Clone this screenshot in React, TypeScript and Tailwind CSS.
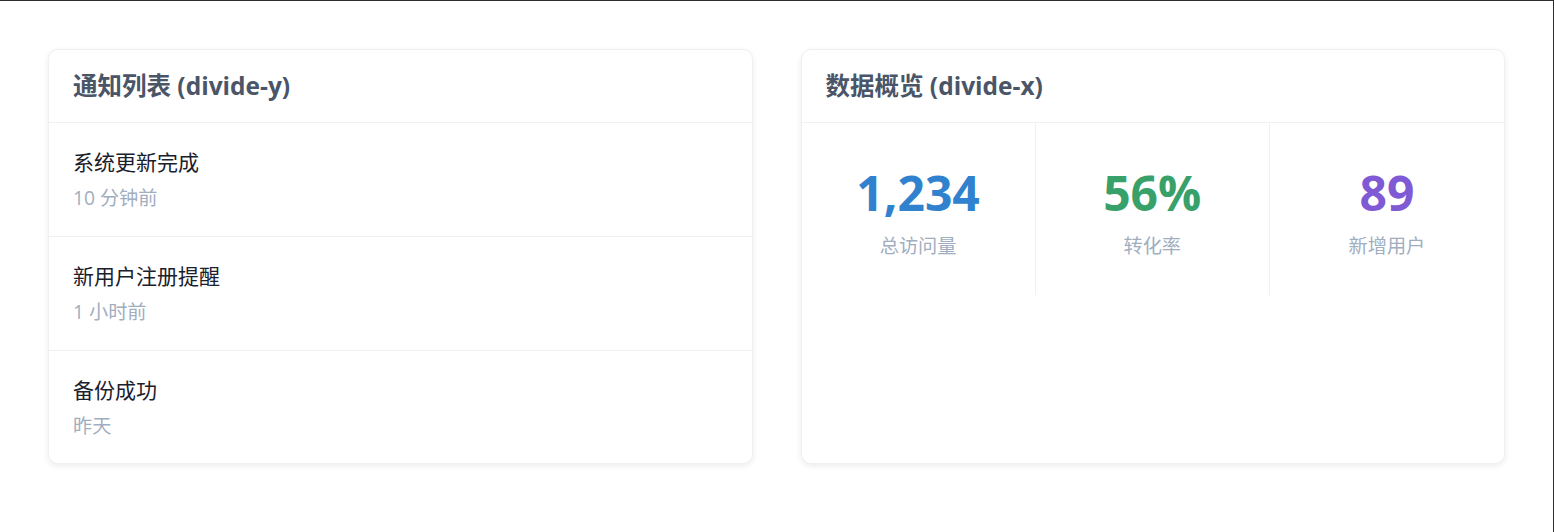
const notices = [
  { title: '系统更新完成', time: '10 分钟前' },
  { title: '新用户注册提醒', time: '1 小时前' },
  { title: '备份成功', time: '昨天' }
]

const stats = [
  { value: '1,234', label: '总访问量', color: 'text-[#3182ce]' },
  { value: '56%', label: '转化率', color: 'text-[#38a169]' },
  { value: '89', label: '新增用户', color: 'text-[#805ad5]' }
]

function CardHeader({ title }: { title: string }) {
  return (
    <div className="border-b border-[#edf2f7] px-6 py-5">
      <h2 className="text-[24.5px] font-bold leading-8 text-[#4a5568]">{title}</h2>
    </div>
  )
}

export default function App() {
  return (
    <div
      className="min-h-[532px] border-t border-r border-[#2d2d2d] bg-white p-12"
      style={{ fontFamily: '"Open Sans", "Noto Sans CJK SC", sans-serif' }}
    >
      <div className="grid grid-cols-2 gap-12">
        {/* divide-y */}
        <div className="overflow-hidden rounded-[10px] border border-[#f0f0f0] bg-white shadow-[0_2px_6px_rgba(0,0,0,0.08)]">
          <CardHeader title="通知列表 (divide-y)" />
          <div className="divide-y divide-[#edf2f7]">
            {notices.map((n) => (
              <div key={n.title} className="px-6 pt-6 pb-6 last:pb-[23px]">
                <p className="text-[21px] leading-[30px] text-[#1a202c]">{n.title}</p>
                <p className="mt-[6px] text-[19.2px] leading-[29px] text-[#a0aec0]">{n.time}</p>
              </div>
            ))}
          </div>
        </div>

        {/* divide-x */}
        <div className="overflow-hidden rounded-[10px] border border-[#f0f0f0] bg-white shadow-[0_2px_6px_rgba(0,0,0,0.08)]">
          <CardHeader title="数据概览 (divide-x)" />
          <div className="grid grid-cols-3 divide-x divide-[#edf2f7]">
            {stats.map((s) => (
              <div key={s.label} className="pt-[41px] pb-[35px] text-center">
                <p className={`text-[48px] font-bold leading-[58px] ${s.color}`}>{s.value}</p>
                <p className="mt-[9px] text-[19.2px] leading-[29px] text-[#a0aec0]">{s.label}</p>
              </div>
            ))}
          </div>
        </div>
      </div>
    </div>
  )
}
